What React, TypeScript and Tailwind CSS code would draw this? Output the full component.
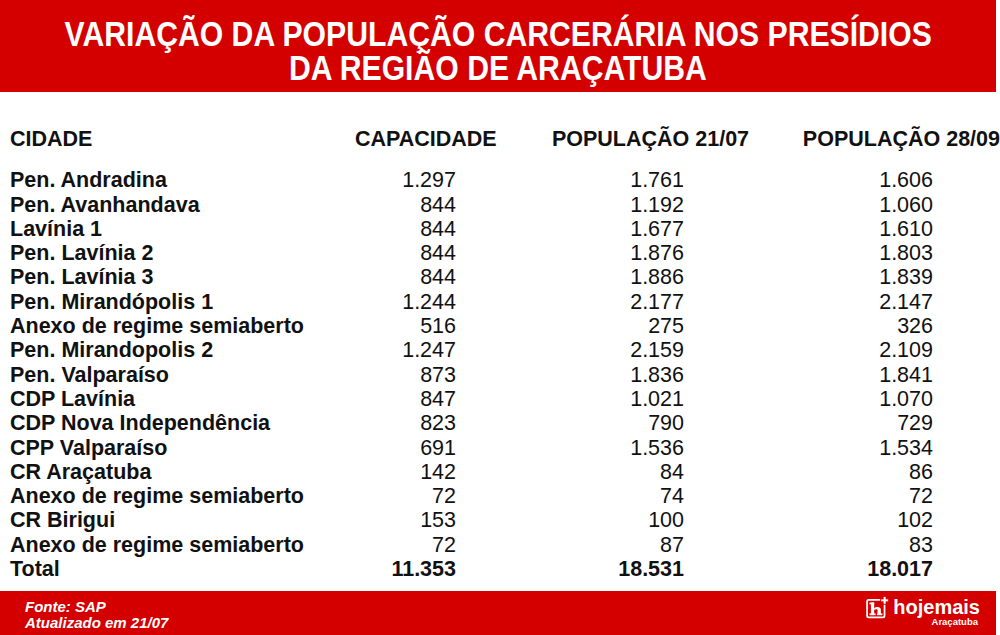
const rows = [
  ["Pen. Andradina", "1.297", "1.761", "1.606"],
  ["Pen. Avanhandava", "844", "1.192", "1.060"],
  ["Lavínia 1", "844", "1.677", "1.610"],
  ["Pen. Lavínia 2", "844", "1.876", "1.803"],
  ["Pen. Lavínia 3", "844", "1.886", "1.839"],
  ["Pen. Mirandópolis 1", "1.244", "2.177", "2.147"],
  ["Anexo de regime semiaberto", "516", "275", "326"],
  ["Pen. Mirandopolis 2", "1.247", "2.159", "2.109"],
  ["Pen. Valparaíso", "873", "1.836", "1.841"],
  ["CDP Lavínia", "847", "1.021", "1.070"],
  ["CDP Nova Independência", "823", "790", "729"],
  ["CPP Valparaíso", "691", "1.536", "1.534"],
  ["CR Araçatuba", "142", "84", "86"],
  ["Anexo de regime semiaberto", "72", "74", "72"],
  ["CR Birigui", "153", "100", "102"],
  ["Anexo de regime semiaberto", "72", "87", "83"],
];

// little "h+" mark of the hojemais logo
const LogoMark = () => (
  <svg width="24" height="24" viewBox="0 0 22 22">
    <rect x="1" y="3.5" width="16" height="16" rx="1.5" fill="none" stroke="white" strokeWidth="1.6" />
    <rect x="4.5" y="6" width="3" height="11.5" fill="white" />
    <rect x="3.2" y="6" width="4.3" height="1.6" fill="white" />
    <rect x="3.2" y="16" width="5.6" height="1.6" fill="white" />
    <path d="M7.5 11.2 C9 9.6 13.6 9.2 13.6 12.6 V17.5 H10.6 V13.2 C10.6 11.8 8.6 11.9 7.5 12.9 Z" fill="white" />
    <rect x="10" y="16" width="5" height="1.6" fill="white" />
    <rect x="13" y="0" width="8" height="8" fill="#d40000" />
    <rect x="16.2" y="0.8" width="1.8" height="6.4" fill="white" />
    <rect x="13.9" y="3.1" width="6.4" height="1.8" fill="white" />
  </svg>
);

export default function App() {
  return (
    <div className="w-[1000px] h-[635px] bg-white flex flex-col overflow-hidden font-['Liberation_Sans',Arial,sans-serif] text-[#111]">
      {/* title is a condensed face in the picture; no narrow font here, so squeeze it */}
      <div className="w-[996px] h-[92px] bg-[#d40000] pt-[17px] flex flex-col items-center text-white font-bold text-[35.5px] leading-[34px] whitespace-nowrap">
        <div className="scale-x-[0.85]">VARIAÇÃO DA POPULAÇÃO CARCERÁRIA NOS PRESÍDIOS</div>
        <div className="scale-x-[0.85]">DA REGIÃO DE ARAÇATUBA</div>
      </div>

      <div className="mt-[35px] flex text-[21.5px] leading-[24.3px] font-bold whitespace-nowrap">
        <div className="w-[355px] pl-[10px]">CIDADE</div>
        <div className="w-[197px]">CAPACIDADE</div>
        <div className="w-[251px]">POPULAÇÃO 21/07</div>
        <div>POPULAÇÃO 28/09</div>
      </div>

      <div className="mt-[17px] pl-[10px] grid grid-cols-[300px_146px_228px_249px] text-[21.5px] leading-[24.3px] whitespace-nowrap">
        {rows.map((r, i) => (
          <div key={i} className="contents">
            <div className="font-bold">{r[0]}</div>
            <div className="text-right">{r[1]}</div>
            <div className="text-right">{r[2]}</div>
            <div className="text-right">{r[3]}</div>
          </div>
        ))}
        <div className="font-bold">Total</div>
        <div className="text-right font-bold">11.353</div>
        <div className="text-right font-bold">18.531</div>
        <div className="text-right font-bold">18.017</div>
      </div>

      <div className="flex-1" />

      <div className="w-[996px] h-[44px] bg-[#d40000] flex justify-between text-white">
        <div className="pl-[25px] pt-[8px] text-[15px] leading-[16px] font-bold italic">
          <div>Fonte: SAP</div>
          <div>Atualizado em 21/07</div>
        </div>
        <div className="flex items-start gap-[3px] pr-[16px] pt-[5px]">
          <LogoMark />
          <div className="flex flex-col items-end pt-[1px]">
            <div className="text-[20px] leading-[20px] font-bold">hojemais</div>
            <div className="text-[9.5px] leading-[10px] font-bold mr-[2px]">Araçatuba</div>
          </div>
        </div>
      </div>
    </div>
  );
}
